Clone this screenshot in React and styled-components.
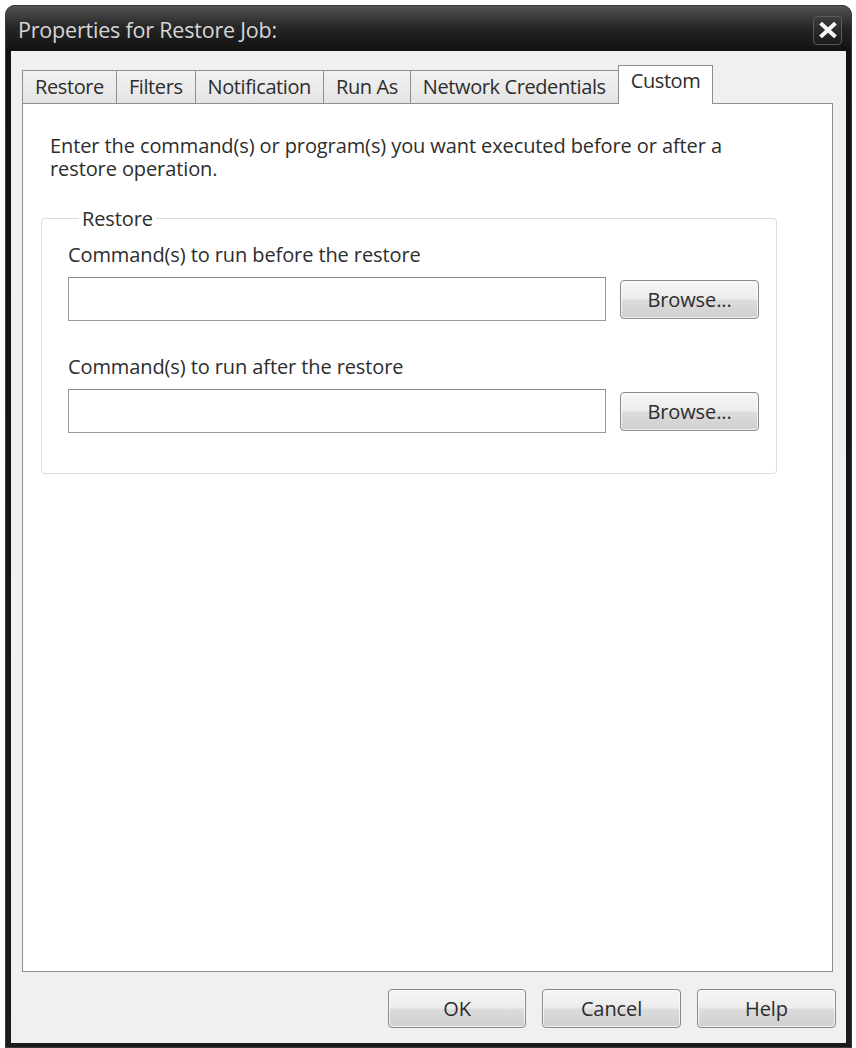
import styled, { createGlobalStyle } from 'styled-components';

const GlobalStyle = createGlobalStyle`
  body {
    margin: 0;
    background: #ffffff;
    font-family: 'Open Sans', 'Noto Sans', sans-serif;
  }
`;

const Window = styled.div`
  margin: 5px 0 0 5px;
  width: 847px;
  height: 1043px;
  box-sizing: border-box;
  padding: 0 6px 5px 6px;
  display: flex;
  flex-direction: column;
  border-radius: 10px 10px 0 0;
  background: linear-gradient(#565656 0, #262626 22px, #111111 46px, #1b1b1b 100%);
  box-shadow: inset 0 0 0 1px #3a3a3a;
`;

const TitleBar = styled.div`
  height: 46px;
  display: flex;
  align-items: center;
  justify-content: space-between;
  padding: 0 4px 0 7px;
`;

const Title = styled.div`
  color: #d6d6d6;
  font-size: 21.5px;
  letter-spacing: -0.2px;
  margin-top: 2px;
`;

const CloseButton = styled.div`
  width: 29px;
  height: 29px;
  box-sizing: border-box;
  border: 1px solid #5a5a5a;
  border-radius: 4px;
  background: linear-gradient(#3c3c3c, #1a1a1a);
  display: flex;
  align-items: center;
  justify-content: center;
  margin-top: 4px;
`;

const Client = styled.div`
  flex: 1;
  background: #f0f0f0;
  display: flex;
  flex-direction: column;
  padding: 14px 13px 15px 11px;
`;

const TabRow = styled.div`
  display: flex;
  align-items: flex-end;
  height: 38px;
  position: relative;
  z-index: 1;
`;

const Tab = styled.div`
  height: ${(p) => (p.$active ? '39px' : '33px')};
  margin-bottom: ${(p) => (p.$active ? '-1px' : '0')};
  box-sizing: border-box;
  padding: ${(p) => (p.$active ? '2px 12px 0' : '3px 12px 0')};
  border: 1px solid #8e8f8f;
  border-bottom: none;
  border-right: ${(p) => (p.$last ? '1px solid #8e8f8f' : 'none')};
  background: ${(p) => (p.$active ? '#ffffff' : 'linear-gradient(#f2f2f2, #e4e4e4)')};
  color: #2d2d2d;
  font-size: 20px;
  line-height: 26px;
  letter-spacing: -0.4px;
  white-space: nowrap;
`;

const Panel = styled.div`
  flex: 1;
  background: #ffffff;
  border: 1px solid #8e8f8f;
  padding: 30px 0 0 27px;
`;

const Text = styled.div`
  font-size: 20px;
  line-height: 23px;
  letter-spacing: -0.1px;
  color: #2d2d2d;
`;

const Description = styled(Text)`
  width: 720px;
`;

const GroupBox = styled.fieldset`
  margin: 25px 0 0 -9px;
  width: 736px;
  box-sizing: border-box;
  padding: 0 17px 40px 26px;
  border: 1px solid #dcdcdc;
  border-radius: 4px;
`;

const Legend = styled.legend`
  padding: 0 3px;
  margin-left: 11px;
  font-size: 20px;
  letter-spacing: -0.1px;
  color: #2d2d2d;
`;

const FieldLabel = styled(Text)`
  margin-top: ${(p) => p.$top}px;
`;

const FieldRow = styled.div`
  display: flex;
  align-items: center;
  gap: 14px;
  margin-top: 11px;
`;

const TextBox = styled.div`
  width: 538px;
  height: 44px;
  box-sizing: border-box;
  border: 1px solid #9a9a9a;
  border-top-color: #8a8a8a;
  background: #ffffff;
`;

const Button = styled.div`
  width: ${(p) => p.$width || 139}px;
  height: 39px;
  box-sizing: border-box;
  border: 1px solid #8a8a8a;
  border-radius: 4px;
  background: linear-gradient(#f6f6f6 0%, #ececec 48%, #dcdcdc 52%, #cfcfcf 100%);
  box-shadow: inset 0 0 0 1px rgba(255, 255, 255, 0.7);
  display: flex;
  align-items: center;
  justify-content: center;
  font-size: 20px;
  letter-spacing: -0.1px;
  color: #2d2d2d;
`;

const ButtonBar = styled.div`
  display: flex;
  justify-content: flex-end;
  gap: 16px;
  margin-top: 17px;
  margin-right: -3px;
`;

const tabs = ['Restore', 'Filters', 'Notification', 'Run As', 'Network Credentials'];

export default function App() {
  return (
    <>
      <GlobalStyle />
      <Window>
        <TitleBar>
          <Title>Properties for Restore Job:</Title>
          <CloseButton>
            <svg width="18" height="16" viewBox="0 0 18 16">
              <path d="M3 2.5 L15 13.5 M15 2.5 L3 13.5" stroke="#f4f4f4" strokeWidth="4" strokeLinecap="square" />
            </svg>
          </CloseButton>
        </TitleBar>
        <Client>
          <TabRow>
            {tabs.map((t) => (
              <Tab key={t}>{t}</Tab>
            ))}
            <Tab $active $last>Custom</Tab>
          </TabRow>
          <Panel>
            <Description>
              Enter the command(s) or program(s) you want executed before or after a restore operation.
            </Description>
            <GroupBox>
              <Legend>Restore</Legend>
              <FieldLabel $top={11}>Command(s) to run before the restore</FieldLabel>
              <FieldRow>
                <TextBox />
                <Button>Browse...</Button>
              </FieldRow>
              <FieldLabel $top={34}>Command(s) to run after the restore</FieldLabel>
              <FieldRow>
                <TextBox />
                <Button>Browse...</Button>
              </FieldRow>
            </GroupBox>
          </Panel>
          <ButtonBar>
            <Button $width={138}>OK</Button>
            <Button>Cancel</Button>
            <Button>Help</Button>
          </ButtonBar>
        </Client>
      </Window>
    </>
  );
}
